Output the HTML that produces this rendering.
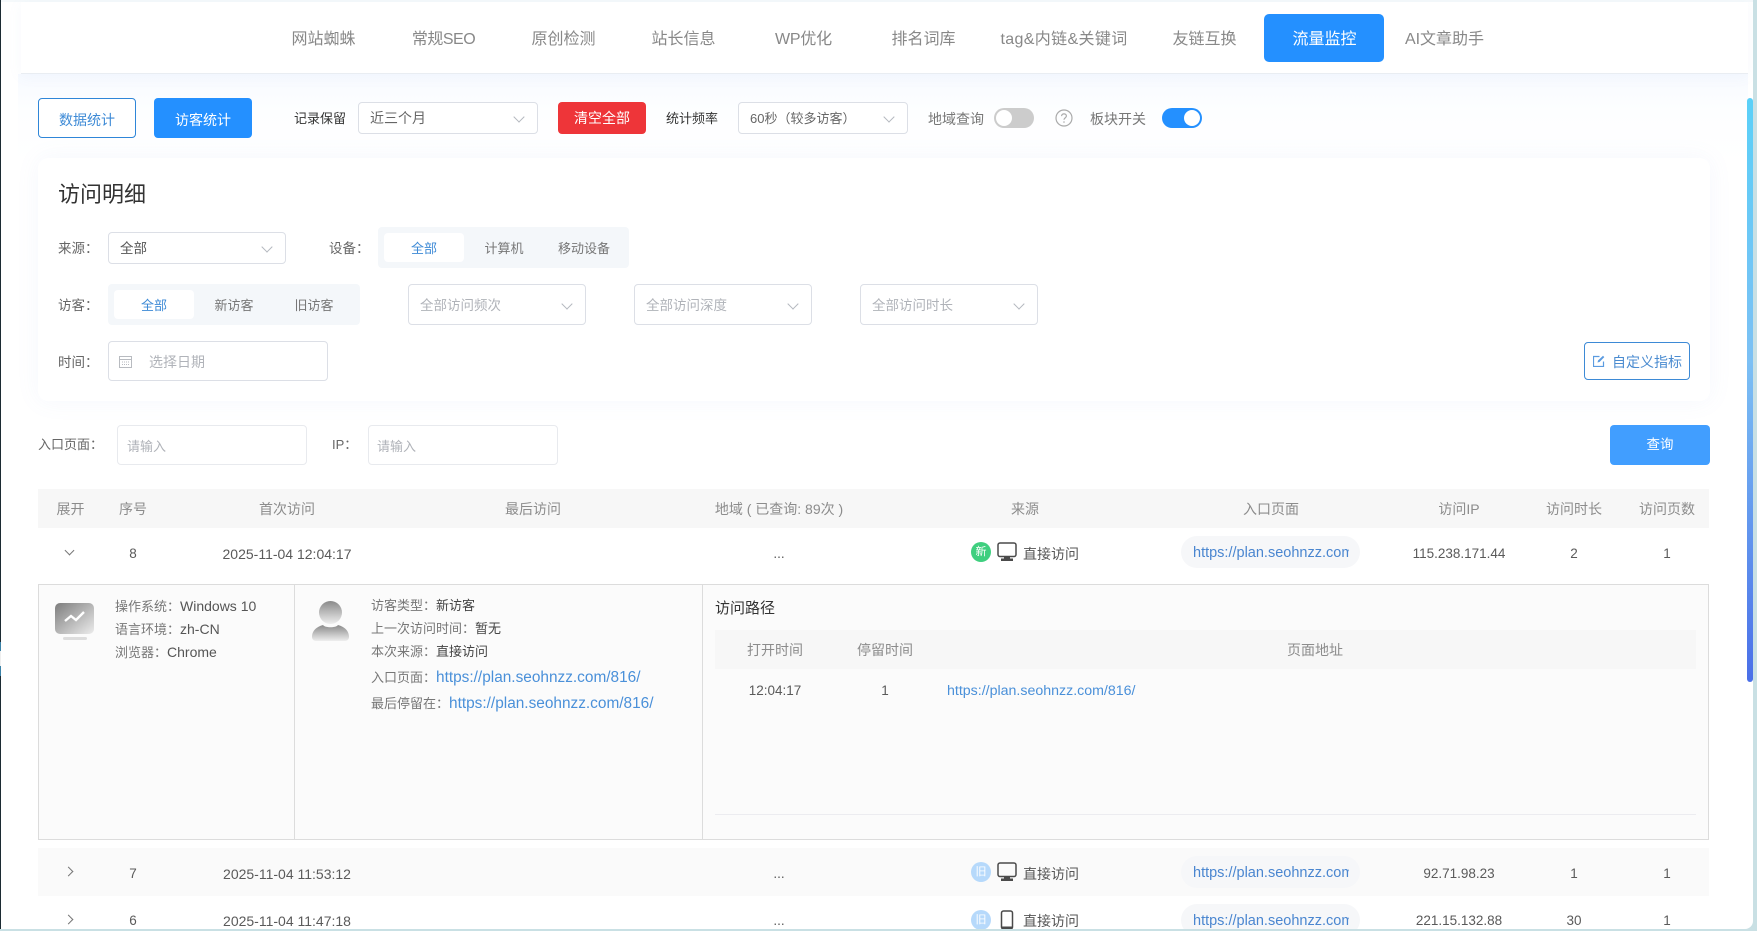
<!DOCTYPE html>
<html lang="zh-CN">
<head>
<meta charset="utf-8">
<title>流量监控</title>
<style>
html,body{margin:0;padding:0;width:1757px;height:931px;overflow:hidden;background:#c9e0e4}
*{box-sizing:border-box}
#page{position:absolute;left:0;top:0;width:1753px;height:929px;background:#fff;overflow:hidden;border-bottom-right-radius:8px;font-family:"Liberation Sans","Noto Sans CJK SC",sans-serif;font-size:14px;color:#606266}
.a{position:absolute}
.t{position:absolute;white-space:nowrap;line-height:20px;height:20px}
.c{transform:translateX(-50%)}
.box{position:absolute;background:#fff;border:1px solid #dcdfe6;border-radius:4px}
.arrow{position:absolute;width:8px;height:8px;border-right:1px solid #b4b8bf;border-bottom:1px solid #b4b8bf;transform:rotate(45deg)}
.arrow.s{width:7px;height:7px;border-color:#777}
.nav{font-size:16px;color:#888}
.ph{color:#b0b3b9}
.lab{color:#666}
.th{font-size:14px;color:#8c8c8c}
.td{font-size:13.5px;color:#5a5a5a}
.dt{font-size:14px;color:#5a5a5a}
.d{font-size:13px;color:#777}
.d b{font-weight:400;color:#444}
.d i{font-style:normal;font-size:14px;color:#555}
.lnk{color:#4a90d9}
.pill{position:absolute;left:1181px;width:179px;height:32px;background:#f6f7f9;border-radius:16px;overflow:hidden}
.pill span{position:absolute;left:12px;top:7px;width:156px;overflow:hidden;white-space:nowrap;line-height:20px;font-size:14.5px;color:#4a86d0}
.bdg{position:absolute;left:971px;width:20px;height:20px;border-radius:50%;color:#fff;font-size:11px;line-height:20px;text-align:center}
.seg{position:absolute;background:#f4f7fa;border-radius:4px}
.seg u{position:absolute;background:#fff;border-radius:4px;left:6px;top:6px;width:80px;height:29px}
</style>
</head>
<body>
<div id="page">
  <!-- left window edge -->
  <div class="a" style="left:0;top:0;width:1px;height:931px;background:#1c2b33"></div>
  <div class="a" style="left:0;top:642px;width:1px;height:9px;background:#3b82a8"></div>
  <div class="a" style="left:0;top:651px;width:1px;height:15px;background:#eee"></div>
  <div class="a" style="left:0;top:666px;width:1px;height:10px;background:#3b82a8"></div>

  <!-- soft top background -->
  <div class="a" style="left:1px;top:0;width:1752px;height:2px;background:#f5f9fb"></div>
  <div class="a" style="left:18px;top:74px;width:1730px;height:90px;background:linear-gradient(#f7faff,#fdfeff 40%,#fff)"></div>

  <!-- nav -->
  <div class="a" style="left:21px;top:2px;width:1727px;height:72px;background:#fff;border-bottom:1px solid #e9edf2;box-shadow:0 2px 14px rgba(120,150,220,.06)"></div>
  <div class="a" style="left:1264px;top:14px;width:120px;height:48px;background:#2490ff;border-radius:5px"></div>
  <div class="t nav c" style="left:323.5px;top:30px">网站蜘蛛</div>
  <div class="t nav c" style="left:443.5px;top:30px;letter-spacing:-.5px">常规SEO</div>
  <div class="t nav c" style="left:563.5px;top:30px">原创检测</div>
  <div class="t nav c" style="left:683.5px;top:30px">站长信息</div>
  <div class="t nav c" style="left:803.5px;top:30px;letter-spacing:-.2px">WP优化</div>
  <div class="t nav c" style="left:923.5px;top:30px">排名词库</div>
  <div class="t nav c" style="left:1064px;top:30px;letter-spacing:.35px">tag&amp;内链&amp;关键词</div>
  <div class="t nav c" style="left:1204.5px;top:30px">友链互换</div>
  <div class="t nav c" style="left:1324.5px;top:30px;color:#fff">流量监控</div>
  <div class="t nav c" style="left:1444.5px;top:30px">AI文章助手</div>

  <!-- toolbar -->
  <div class="box" style="left:38px;top:98px;width:98px;height:40px;border-color:#2f86d8"></div>
  <div class="t c" style="left:87px;top:110px;color:#3d8ad6">数据统计</div>
  <div class="a" style="left:154px;top:98px;width:98px;height:40px;background:#2490ff;border-radius:4px"></div>
  <div class="t c" style="left:203px;top:110px;color:#fff">访客统计</div>
  <div class="t" style="left:294px;top:109px;font-size:13px;color:#333">记录保留</div>
  <div class="box" style="left:358px;top:102px;width:180px;height:32px"></div>
  <div class="t" style="left:370px;top:108px;color:#666">近三个月</div>
  <div class="arrow" style="left:515px;top:113px"></div>
  <div class="a" style="left:558px;top:102px;width:88px;height:32px;background:#ee3539;border-radius:4px"></div>
  <div class="t c" style="left:602px;top:108px;color:#fff">清空全部</div>
  <div class="t" style="left:666px;top:109px;font-size:13px;color:#333">统计频率</div>
  <div class="box" style="left:738px;top:102px;width:170px;height:32px"></div>
  <div class="t" style="left:750px;top:109px;font-size:13px;color:#666">60秒（较多访客）</div>
  <div class="arrow" style="left:885px;top:113px"></div>
  <div class="t" style="left:928px;top:109px;color:#777;font-size:14px">地域查询</div>
  <div class="a" style="left:994px;top:108px;width:40px;height:20px;background:#ccc;border-radius:10px"></div>
  <div class="a" style="left:996px;top:110px;width:16px;height:16px;background:#fff;border-radius:50%"></div>
  <svg class="a" style="left:1055px;top:109px" width="18" height="18" viewBox="0 0 18 18"><circle cx="9" cy="9" r="8" fill="none" stroke="#aaa" stroke-width="1.2"/><path d="M6.6 7.1c0-1.4 1.1-2.2 2.4-2.2s2.4.8 2.4 2.1c0 1.9-2.4 1.9-2.4 3.8" fill="none" stroke="#aaa" stroke-width="1.2"/><circle cx="9" cy="13" r=".8" fill="#aaa"/></svg>
  <div class="t" style="left:1090px;top:109px;color:#777;font-size:14px">板块开关</div>
  <div class="a" style="left:1162px;top:108px;width:40px;height:20px;background:#2490ff;border-radius:10px"></div>
  <div class="a" style="left:1184px;top:110px;width:16px;height:16px;background:#fff;border-radius:50%"></div>

  <!-- filter card -->
  <div class="a" style="left:38px;top:158px;width:1672px;height:243px;background:#fff;border-radius:10px;box-shadow:0 0 24px rgba(110,140,230,.07)"></div>
  <div class="t" style="left:58px;top:183px;font-size:22px;color:#333;line-height:24px;height:24px">访问明细</div>

  <div class="t lab" style="left:58px;top:239px;font-size:13.5px">来源：</div>
  <div class="box" style="left:108px;top:232px;width:178px;height:32px"></div>
  <div class="t" style="left:120px;top:239px;color:#555;font-size:13.5px">全部</div>
  <div class="arrow" style="left:263px;top:243px"></div>
  <div class="t lab" style="left:329px;top:239px;font-size:13.5px">设备：</div>
  <div class="seg" style="left:378px;top:227px;width:251px;height:41px"><u></u></div>
  <div class="t c" style="left:424px;top:239px;color:#3d8ad6;font-size:13px">全部</div>
  <div class="t c" style="left:504px;top:239px;color:#777;font-size:13px">计算机</div>
  <div class="t c" style="left:584px;top:239px;color:#777;font-size:13px">移动设备</div>

  <div class="t lab" style="left:58px;top:296px;font-size:13.5px">访客：</div>
  <div class="seg" style="left:108px;top:284px;width:252px;height:41px"><u></u></div>
  <div class="t c" style="left:154px;top:296px;color:#3d8ad6;font-size:13px">全部</div>
  <div class="t c" style="left:234px;top:296px;color:#777;font-size:13px">新访客</div>
  <div class="t c" style="left:314px;top:296px;color:#777;font-size:13px">旧访客</div>
  <div class="box" style="left:408px;top:284px;width:178px;height:41px"></div>
  <div class="t ph" style="left:420px;top:296px;font-size:13.5px">全部访问频次</div>
  <div class="arrow" style="left:563px;top:300px"></div>
  <div class="box" style="left:634px;top:284px;width:178px;height:41px"></div>
  <div class="t ph" style="left:646px;top:296px;font-size:13.5px">全部访问深度</div>
  <div class="arrow" style="left:789px;top:300px"></div>
  <div class="box" style="left:860px;top:284px;width:178px;height:41px"></div>
  <div class="t ph" style="left:872px;top:296px;font-size:13.5px">全部访问时长</div>
  <div class="arrow" style="left:1015px;top:300px"></div>

  <div class="t lab" style="left:58px;top:353px;font-size:13.5px">时间：</div>
  <div class="box" style="left:108px;top:341px;width:220px;height:40px"></div>
  <svg class="a" style="left:119px;top:355px" width="13" height="13" viewBox="0 0 13 13"><path d="M.5 1.5h12v11H.5zM.5 4.5h12" fill="none" stroke="#b8bbc0"/><path d="M3 7h7M3 9.5h7" stroke="#b8bbc0" stroke-dasharray="1 1"/></svg>
  <div class="t ph" style="left:149px;top:352px;font-size:14px">选择日期</div>
  <div class="box" style="left:1584px;top:342px;width:106px;height:38px;border-color:#3d8ad6"></div>
  <svg class="a" style="left:1593px;top:355px" width="12" height="12" viewBox="0 0 12 12"><path d="M10.5 6.5v5h-10v-10h6" fill="none" stroke="#5b9be0" stroke-width="1.2"/><path d="M4.5 7.5l.5-2L10 .8l1.3 1.3-4.8 4.9z" fill="#5b9be0"/></svg>
  <div class="t" style="left:1612px;top:352px;color:#4a8bd0;font-size:14px">自定义指标</div>

  <!-- query row -->
  <div class="t lab" style="left:38px;top:435px;font-size:13px">入口页面：</div>
  <div class="box" style="left:117px;top:425px;width:190px;height:40px;border-color:#e8eaee"></div>
  <div class="t ph" style="left:127px;top:437px;font-size:13px">请输入</div>
  <div class="t lab" style="left:332px;top:435px;font-size:13px">IP：</div>
  <div class="box" style="left:368px;top:425px;width:190px;height:40px;border-color:#e8eaee"></div>
  <div class="t ph" style="left:377px;top:437px;font-size:13px">请输入</div>
  <div class="a" style="left:1610px;top:425px;width:100px;height:40px;background:#419eff;border-radius:4px"></div>
  <div class="t c" style="left:1660px;top:435px;color:#fff;font-size:13.5px">查询</div>

  <!-- table header -->
  <div class="a" style="left:38px;top:489px;width:1671px;height:39px;background:#f7f7f7"></div>
  <div class="t th c" style="left:70.5px;top:499px">展开</div>
  <div class="t th c" style="left:133px;top:499px">序号</div>
  <div class="t th c" style="left:287px;top:499px">首次访问</div>
  <div class="t th c" style="left:533px;top:499px">最后访问</div>
  <div class="t th c" style="left:779px;top:499px">地域 ( 已查询: 89次 )</div>
  <div class="t th c" style="left:1025px;top:499px">来源</div>
  <div class="t th c" style="left:1271px;top:499px">入口页面</div>
  <div class="t th c" style="left:1459px;top:499px">访问IP</div>
  <div class="t th c" style="left:1574px;top:499px">访问时长</div>
  <div class="t th c" style="left:1667px;top:499px">访问页数</div>

  <!-- row 8 -->
  <div class="arrow s" style="left:66px;top:547px"></div>
  <div class="t td c" style="left:133px;top:544px">8</div>
  <div class="t dt c" style="left:287px;top:544px">2025-11-04 12:04:17</div>
  <div class="t td c" style="left:779px;top:544px">...</div>
  <div class="bdg" style="top:542px;background:#3fcf7f">新</div>
  <svg class="a" style="left:997px;top:542px" width="20" height="20" viewBox="0 0 20 20"><rect x="1" y="1" width="18" height="13.5" rx="2" fill="none" stroke="#4a4a4a" stroke-width="1.5"/><path d="M7 15h6v1.5H7zM4 16.5h12V19H4z" fill="#4a4a4a"/></svg>
  <div class="t" style="left:1023px;top:544px;color:#555">直接访问</div>
  <div class="pill" style="top:536px"><span>https://plan.seohnzz.com/816/</span></div>
  <div class="t td c" style="left:1459px;top:544px">115.238.171.44</div>
  <div class="t td c" style="left:1574px;top:544px">2</div>
  <div class="t td c" style="left:1667px;top:544px">1</div>

  <!-- expanded panel -->
  <div class="a" style="left:38px;top:584px;width:1671px;height:256px;background:#fbfbfb;border:1px solid #dcdcdc"></div>
  <div class="a" style="left:294px;top:584px;width:1px;height:256px;background:#dcdcdc"></div>
  <div class="a" style="left:702px;top:584px;width:1px;height:256px;background:#dcdcdc"></div>
  <svg class="a" style="left:55px;top:602px" width="40" height="40" viewBox="0 0 40 40"><defs><linearGradient id="g1" x1="0" y1="0" x2="1" y2="1"><stop offset="0" stop-color="#7d7d7d"/><stop offset="1" stop-color="#ececec"/></linearGradient><linearGradient id="g2" x1="0" y1="0" x2="0" y2="1"><stop offset="0" stop-color="#8a8a8a"/><stop offset="1" stop-color="#eee"/></linearGradient></defs><rect x="0" y="1" width="39" height="31" rx="5" fill="url(#g1)"/><rect x="8" y="35" width="24" height="3" rx="1.5" fill="#ddd"/><path d="M10 19l6-5 5 4 8-8" fill="none" stroke="#fff" stroke-width="2.4"/></svg>
  <div class="t d" style="left:115px;top:596px">操作系统：<i>Windows 10</i></div>
  <div class="t d" style="left:115px;top:619px">语言环境：<i>zh-CN</i></div>
  <div class="t d" style="left:115px;top:642px">浏览器：<i>Chrome</i></div>
  <svg class="a" style="left:312px;top:601px" width="37" height="40" viewBox="0 0 37 40"><circle cx="18.5" cy="11.5" r="11.5" fill="url(#g2)"/><path d="M0 36c0-6 4-10 11-12 2 3 13 3 15 0 7 2 11 6 11 12 0 2.500-2 4-4 4H4c-2 0-4-1.500-4-4z" fill="url(#g2)"/></svg>
  <div class="t d" style="left:371px;top:596px">访客类型：<b>新访客</b></div>
  <div class="t d" style="left:371px;top:619px">上一次访问时间：<b>暂无</b></div>
  <div class="t d" style="left:371px;top:642px">本次来源：<b>直接访问</b></div>
  <div class="t d" style="left:371px;top:668px">入口页面：<span class="lnk" style="font-size:15.4px">https://plan.seohnzz.com/816/</span></div>
  <div class="t d" style="left:371px;top:694px">最后停留在：<span class="lnk" style="font-size:15.4px">https://plan.seohnzz.com/816/</span></div>

  <div class="t" style="left:715px;top:599px;font-size:15px;color:#333">访问路径</div>
  <div class="a" style="left:715px;top:630px;width:981px;height:39px;background:#f7f7f7"></div>
  <div class="t th c" style="left:775px;top:640px">打开时间</div>
  <div class="t th c" style="left:885px;top:640px">停留时间</div>
  <div class="t th c" style="left:1315px;top:640px">页面地址</div>
  <div class="t td c" style="left:775px;top:681px">12:04:17</div>
  <div class="t td c" style="left:885px;top:681px">1</div>
  <div class="t" style="left:947px;top:681px;font-size:14.2px;color:#4a90d9">https://plan.seohnzz.com/816/</div>
  <div class="a" style="left:715px;top:814px;width:981px;height:1px;background:#ececf0"></div>

  <!-- row 7 -->
  <div class="a" style="left:38px;top:848px;width:1671px;height:48px;background:#fafafa"></div>
  <div class="arrow s" style="left:65px;top:868px;transform:rotate(-45deg)"></div>
  <div class="t td c" style="left:133px;top:864px">7</div>
  <div class="t dt c" style="left:287px;top:864px">2025-11-04 11:53:12</div>
  <div class="t td c" style="left:779px;top:864px">...</div>
  <div class="bdg" style="top:862px;background:#b6d9fb">旧</div>
  <svg class="a" style="left:997px;top:862px" width="20" height="20" viewBox="0 0 20 20"><rect x="1" y="1" width="18" height="13.5" rx="2" fill="none" stroke="#4a4a4a" stroke-width="1.5"/><path d="M7 15h6v1.5H7zM4 16.5h12V19H4z" fill="#4a4a4a"/></svg>
  <div class="t" style="left:1023px;top:864px;color:#555">直接访问</div>
  <div class="pill" style="top:856px"><span>https://plan.seohnzz.com/816/</span></div>
  <div class="t td c" style="left:1459px;top:864px">92.71.98.23</div>
  <div class="t td c" style="left:1574px;top:864px">1</div>
  <div class="t td c" style="left:1667px;top:864px">1</div>

  <!-- row 6 -->
  <div class="arrow s" style="left:65px;top:916px;transform:rotate(-45deg)"></div>
  <div class="t td c" style="left:133px;top:911px">6</div>
  <div class="t dt c" style="left:287px;top:911px">2025-11-04 11:47:18</div>
  <div class="t td c" style="left:779px;top:911px">...</div>
  <div class="bdg" style="top:910px;background:#b6d9fb">旧</div>
  <svg class="a" style="left:1000px;top:910px" width="14" height="20" viewBox="0 0 14 20"><rect x="1.5" y="1" width="11" height="18" rx="2" fill="none" stroke="#4a4a4a" stroke-width="1.5"/><path d="M2 16.5h10v2H2z" fill="#4a4a4a"/></svg>
  <div class="t" style="left:1023px;top:911px;color:#555">直接访问</div>
  <div class="pill" style="top:904px"><span>https://plan.seohnzz.com/816/</span></div>
  <div class="t td c" style="left:1459px;top:911px">221.15.132.88</div>
  <div class="t td c" style="left:1574px;top:911px">30</div>
  <div class="t td c" style="left:1667px;top:911px">1</div>

  <!-- scrollbar -->
  <div class="a" style="left:1747px;top:98px;width:6px;height:584px;border-radius:3px;background:linear-gradient(#5ad0f8,#7cc0f4 45%,#4a6fe8)"></div>
</div>
</body>
</html>
